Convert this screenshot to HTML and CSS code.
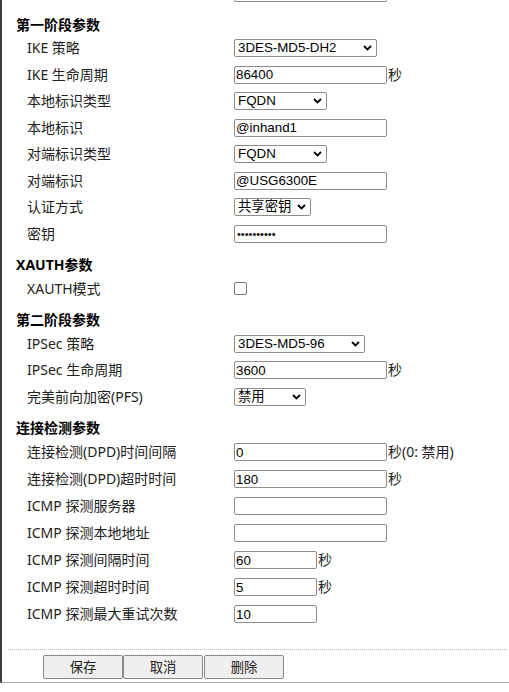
FILE: index.html
```html
<!DOCTYPE html>
<html>
<head>
  <meta charset="utf-8">
  <title>IPSec 隧道配置</title>
  <link rel="stylesheet" href="styles.css">
</head>
<body>
<div class="panel">

  <!-- previous row, scrolled off the top -->
  <div class="cut"><input type="text" class="txt" value=""></div>

  <div class="sec">第一阶段参数</div>
  <div class="row">
    <span class="lbl">IKE 策略</span>
    <span class="sel w-ike">
      <select>
        <option selected>3DES-MD5-DH2</option>
        <option>3DES-SHA1-DH2</option>
        <option>AES128-SHA1-DH2</option>
      </select>
      <svg width="9" height="6" viewBox="0 0 9 6"><path d="M1 1 L4.5 4.5 L8 1" fill="none" stroke="#000" stroke-width="1.8"/></svg>
    </span>
  </div>
  <div class="row">
    <span class="lbl">IKE 生命周期</span>
    <input type="text" class="txt" value="86400"><span class="unit">秒</span>
  </div>
  <div class="row">
    <span class="lbl">本地标识类型</span>
    <span class="sel w-id">
      <select>
        <option>IP地址</option>
        <option selected>FQDN</option>
        <option>USERFQDN</option>
      </select>
      <svg width="9" height="6" viewBox="0 0 9 6"><path d="M1 1 L4.5 4.5 L8 1" fill="none" stroke="#000" stroke-width="1.8"/></svg>
    </span>
  </div>
  <div class="row">
    <span class="lbl">本地标识</span>
    <input type="text" class="txt" value="@inhand1">
  </div>
  <div class="row">
    <span class="lbl">对端标识类型</span>
    <span class="sel w-id">
      <select>
        <option>IP地址</option>
        <option selected>FQDN</option>
        <option>USERFQDN</option>
      </select>
      <svg width="9" height="6" viewBox="0 0 9 6"><path d="M1 1 L4.5 4.5 L8 1" fill="none" stroke="#000" stroke-width="1.8"/></svg>
    </span>
  </div>
  <div class="row">
    <span class="lbl">对端标识</span>
    <input type="text" class="txt" value="@USG6300E">
  </div>
  <div class="row">
    <span class="lbl">认证方式</span>
    <span class="sel w-auth">
      <select>
        <option selected>共享密钥</option>
        <option>数字证书</option>
      </select>
      <svg width="9" height="6" viewBox="0 0 9 6"><path d="M1 1 L4.5 4.5 L8 1" fill="none" stroke="#000" stroke-width="1.8"/></svg>
    </span>
  </div>
  <div class="row">
    <span class="lbl">密钥</span>
    <input type="password" class="txt pwd" value="1234567890">
  </div>

  <div class="sec">XAUTH参数</div>
  <div class="row">
    <span class="lbl">XAUTH模式</span>
    <input type="checkbox" class="chk">
  </div>

  <div class="sec">第二阶段参数</div>
  <div class="row">
    <span class="lbl">IPSec 策略</span>
    <span class="sel w-ipsec">
      <select>
        <option selected>3DES-MD5-96</option>
        <option>3DES-SHA1-96</option>
        <option>AES128-SHA1-96</option>
      </select>
      <svg width="9" height="6" viewBox="0 0 9 6"><path d="M1 1 L4.5 4.5 L8 1" fill="none" stroke="#000" stroke-width="1.8"/></svg>
    </span>
  </div>
  <div class="row">
    <span class="lbl">IPSec 生命周期</span>
    <input type="text" class="txt" value="3600"><span class="unit">秒</span>
  </div>
  <div class="row">
    <span class="lbl">完美前向加密(PFS)</span>
    <span class="sel w-pfs">
      <select>
        <option selected>禁用</option>
        <option>GROUP1</option>
        <option>GROUP2</option>
      </select>
      <svg width="9" height="6" viewBox="0 0 9 6"><path d="M1 1 L4.5 4.5 L8 1" fill="none" stroke="#000" stroke-width="1.8"/></svg>
    </span>
  </div>

  <div class="sec">连接检测参数</div>
  <div class="group-dpd">
    <div class="row">
      <span class="lbl">连接检测(DPD)时间间隔</span>
      <input type="text" class="txt" value="0"><span class="unit">秒(0: 禁用)</span>
    </div>
    <div class="row">
      <span class="lbl">连接检测(DPD)超时时间</span>
      <input type="text" class="txt" value="180"><span class="unit">秒</span>
    </div>
    <div class="row">
      <span class="lbl">ICMP 探测服务器</span>
      <input type="text" class="txt" value="">
    </div>
    <div class="row">
      <span class="lbl">ICMP 探测本地地址</span>
      <input type="text" class="txt" value="">
    </div>
    <div class="row">
      <span class="lbl">ICMP 探测间隔时间</span>
      <input type="text" class="txt short" value="60"><span class="unit">秒</span>
    </div>
    <div class="row">
      <span class="lbl">ICMP 探测超时时间</span>
      <input type="text" class="txt short" value="5"><span class="unit">秒</span>
    </div>
    <div class="row">
      <span class="lbl">ICMP 探测最大重试次数</span>
      <input type="text" class="txt short" value="10">
    </div>
  </div>

  <div class="foot">
    <button>保存</button><button>取消</button><button class="del">删除</button>
  </div>
</div>
</body>
</html>
```

FILE: styles.css
```css
body {
    margin: 0;
    background: #fff;
    font-family: "Noto Sans", "Noto Sans CJK SC", sans-serif;
    font-size: 14px;
    color: #222;
}
.panel {
    border-left: 2px solid #3c3c3c;
    border-bottom: 1px solid #a8a8a8;
    padding-bottom: 3px;
}
.cut {
    height: 2px;
    overflow: hidden;
    display: flex;
    align-items: flex-end;
    padding-left: 232px;
    margin-bottom: 4.5px;
}
.sec {
    height: 28.5px;
    box-sizing: border-box;
    padding: 9px 0 0 14px;
    line-height: 18px;
    font-weight: bold;
    color: #000;
}
.row {
    display: flex;
    align-items: center;
    height: 26.5px;
    padding-left: 25px;
    white-space: nowrap;
}
.group-dpd .row {
    height: 27px;
}
.lbl {
    width: 207px;
    flex: none;
    line-height: 18px;
}
.txt {
    box-sizing: border-box;
    width: 153px;
    height: 18px;
    margin: 0;
    padding: 0 1px;
    border: 1px solid #8c8c8c;
    border-radius: 2px;
    font-family: "Liberation Sans", Arial, sans-serif;
    font-size: 13.333px;
    color: #000;
    background: #fff;
    outline: none;
}
.txt.short {
    width: 83px;
}
.pwd {
    padding-left: 2px;
    font-size: 11px;
}
.unit {
    margin-left: 1px;
    line-height: 18px;
}
.sel {
    position: relative;
    display: inline-flex;
    height: 18px;
}
.sel select {
    appearance: none;
    -webkit-appearance: none;
    box-sizing: border-box;
    width: 100%;
    height: 18px;
    margin: 0;
    padding: 0 14px 0 3px;
    border: 1px solid #8c8c8c;
    border-radius: 2px;
    background: #fff;
    font-family: "Liberation Sans", "Noto Sans CJK SC", Arial, sans-serif;
    font-size: 13.333px;
    line-height: 16px;
    color: #000;
    outline: none;
}
.sel svg {
    position: absolute;
    right: 5px;
    top: 6px;
    pointer-events: none;
}
.w-ike { width: 143px; }
.w-id { width: 93px; }
.w-auth { width: 77px; }
.w-ipsec { width: 131px; }
.w-pfs { width: 72px; }
.chk {
    appearance: none;
    -webkit-appearance: none;
    width: 13px;
    height: 13px;
    margin: 0;
    border: 1px solid #767676;
    border-radius: 2px;
    background: #fff;
}
.foot {
    margin: 21px 2px 0 6px;
    border-top: 1px dotted #b8b8b8;
    padding: 5px 0 0 35px;
    display: flex;
}
.foot button {
    box-sizing: border-box;
    width: 80px;
    height: 24px;
    margin: 0;
    padding: 0;
    border: 1px solid #8a8a8a;
    border-radius: 2px;
    background: #efefef;
    font-family: "Noto Sans CJK SC", sans-serif;
    font-size: 13.333px;
    color: #222;
}
.foot .del {
    margin-left: 1px;
}
```
